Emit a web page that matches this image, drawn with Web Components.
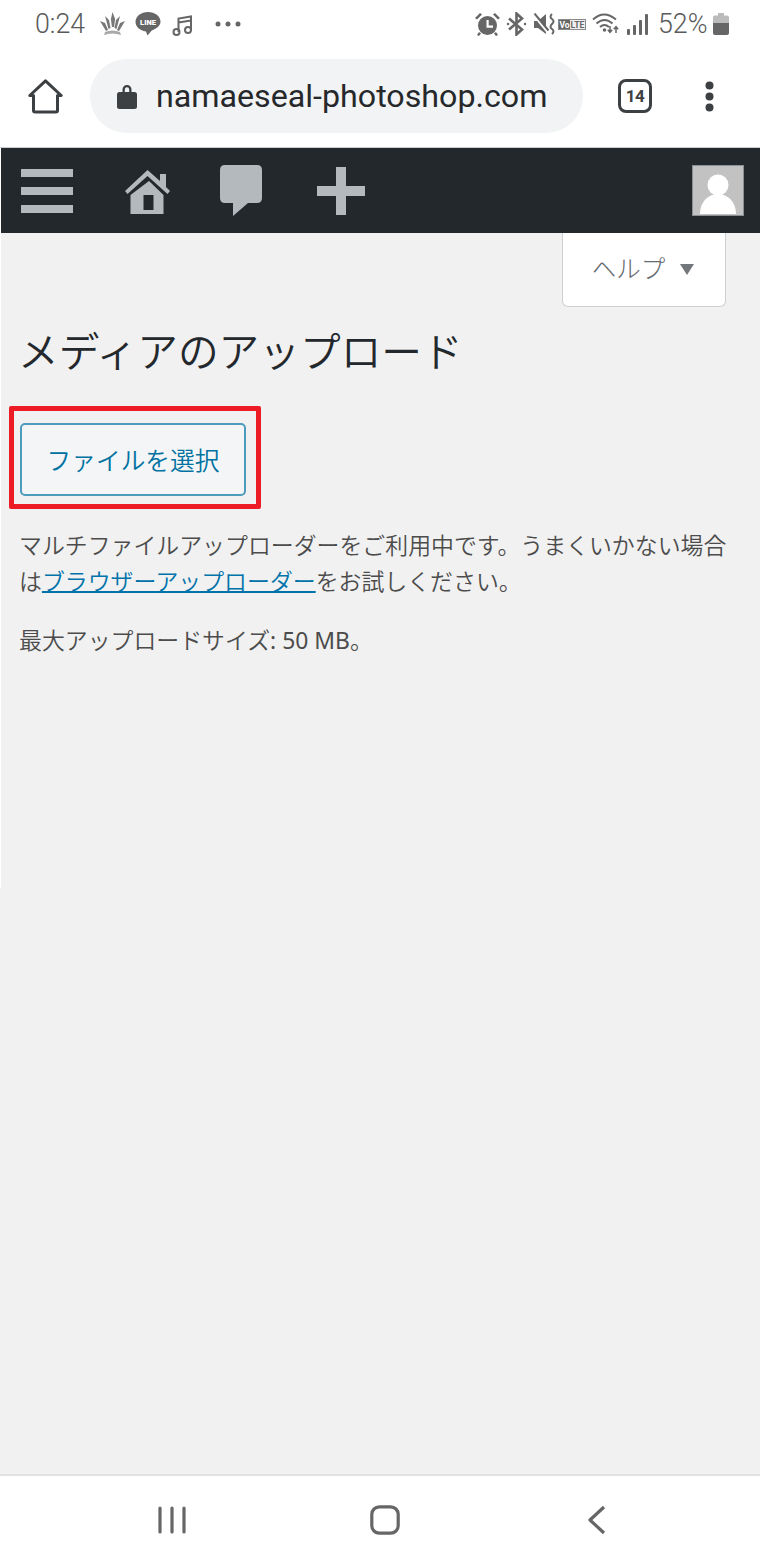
<!DOCTYPE html>
<html lang="ja">
<head>
<meta charset="utf-8">
<title>メディアのアップロード</title>
<style>
  html, body { margin: 0; padding: 0; background: #fff; }
  body { width: 760px; height: 1568px; overflow: hidden; display: flex; flex-direction: column; font-family: "Noto Sans CJK JP", "Noto Sans", sans-serif; }
  upload-page { flex: 1; }
  upload-page a { color: #0073aa; text-decoration: underline; text-decoration-thickness: 2px; }
  upload-page p { margin: 0 0 23px; }
  upload-page .latin { font-family: "Noto Sans", sans-serif; font-weight: 400; }
</style>
</head>
<body>
<status-bar></status-bar>
<browser-bar url="namaeseal-photoshop.com" tabs="14"></browser-bar>
<admin-bar></admin-bar>
<upload-page>
  <help-tab slot="help">ヘルプ</help-tab>
  <span slot="title">メディアのアップロード</span>
  <select-button slot="action">ファイルを選択</select-button>
  <p><span>マルチファイルアップローダーをご利用中です。うまくいかない場合</span><br><span>は</span><a href="#">ブラウザーアップローダー</a><span>をお試しください。</span></p>
  <p><span>最大アップロードサイズ</span><span class="latin">: 50 MB</span><span>。</span></p>
</upload-page>
<nav-bar></nav-bar>

<script>
class StatusBar extends HTMLElement {
  constructor() {
    super();
    this.attachShadow({ mode: 'open' });
  }

  connectedCallback() {
    this.shadowRoot.innerHTML = `
      <style>
        :host { display: flex; align-items: center; height: 48px; background: #fff; color: #5a5a5a; font: 300 26.800px Roboto, sans-serif; }
        svg { display: block; flex: none; }
        .time { margin-left: 35px; width: 52px; }
        .pct { margin-left: 10px; width: 51px; }
      </style>
      <span class="time">0:24</span>
      <svg style="margin-left:13px" width="25" height="24" viewBox="0 0 25 24" fill="#777">
        <path d="M12.500 0l2.600 7-1 8h-2.200l-1-8zM5 4l4 4 1.500 8-2 1zM20 4l-4 4-1.500 8 2 1zM0 9l5 2 3 7-2 1zM25 9l-5 2-3 7 2 1z"/>
        <path d="M5 20q7.500-3 15 0l1 3q-8.500-3-17 0z" fill="#aaa"/>
      </svg>
      <svg style="margin-left:10px" width="26" height="24" viewBox="0 0 26 24">
        <path d="M13 0C6 0 .5 4.300.5 9.800c0 5 4.300 8.800 10.500 9.600l1.500 4 4-4.700c5-2 9-5 9-8.900C25.500 4.300 20 0 13 0z" fill="#666"/>
        <text x="13" y="12.500" text-anchor="middle" font-family="Roboto, sans-serif" font-weight="900" font-size="7.500" fill="#fff">LINE</text>
      </svg>
      <svg style="margin-left:11px" width="21" height="23" viewBox="0 0 21 23" fill="none" stroke="#666" stroke-width="2">
        <path d="M6.500 19V5.500L19 3.500V17M6.500 9.500L19 7.500"/>
        <circle cx="4.500" cy="19" r="3"/><circle cx="16" cy="17" r="3"/>
      </svg>
      <svg style="margin-left:22px" width="26" height="6" viewBox="0 0 26 6" fill="#666">
        <circle cx="3" cy="3" r="2.500"/><circle cx="13" cy="3" r="2.500"/><circle cx="23" cy="3" r="2.500"/>
      </svg>
      <span style="flex:1"></span>
      <svg width="25" height="23" viewBox="0 0 25 23" fill="#666">
        <path d="M0 5l5-5 2 1.500-5 5zM25 5l-5-5-2 1.500 5 5z"/>
        <path fill-rule="evenodd" d="M12.500 3a9.500 9.500 0 1 0 0 19 9.500 9.500 0 0 0 0-19zM11.500 7h2.200v5.500h4.300v2.200h-6.500z"/>
        <path d="M4 19l2 1.500-2 2.500-2-1zM21 19l-2 1.500 2 2.500 2-1z"/>
      </svg>
      <svg style="margin-left:6px" width="21" height="24" viewBox="0 0 21 24" fill="none" stroke="#666" stroke-width="2.600">
        <path d="M3 6.500l13 11-5.500 5V1.500l5.500 5-13 11"/>
        <circle cx="2" cy="12" r="1.200" fill="#666" stroke="none"/><circle cx="19" cy="12" r="1.200" fill="#666" stroke="none"/>
      </svg>
      <svg style="margin-left:6px" width="23" height="22" viewBox="0 0 23 22">
        <path d="M1 8h4l8-7v20l-8-6H1z" fill="#666"/>
        <path d="M0 1.500l14 17" fill="none" stroke="#fff" stroke-width="2"/>
        <path d="M1.500 .5l14 17" fill="none" stroke="#666" stroke-width="2"/>
        <path d="M19 1q-3 3 0 5t0 5 0 5 0 5" fill="none" stroke="#666" stroke-width="2"/>
      </svg>
      <svg style="margin-left:2px" width="28" height="11" viewBox="0 0 28 11">
        <rect width="28" height="11" fill="#8a8a8a"/>
        <rect x="1" y="1" width="11" height="9" fill="#666"/>
        <rect x="12" y="1" width="15" height="9" fill="#eee"/>
        <text x="1.500" y="8.700" font-family="Roboto, sans-serif" font-weight="700" font-size="8.500" fill="#fff" textLength="10">Vo</text>
        <text x="12.500" y="8.700" font-family="Roboto, sans-serif" font-weight="700" font-size="8.500" fill="#666" textLength="14" lengthAdjust="spacingAndGlyphs">LTE</text>
      </svg>
      <svg style="margin-left:6px" width="27" height="22" viewBox="0 0 27 22" fill="none" stroke="#666" stroke-width="2">
        <path d="M1 6.500q11-10 23 0M4.500 10.500q8-7 16 0M8 14q4.500-4 9 0"/>
        <circle cx="12.500" cy="17" r="1.800" fill="#666" stroke="none"/>
        <path d="M18 13v6m-2.200-2.200l2.200 2.500 2.200-2.500M24 20v-6m-2.200 2.200l2.200-2.500 2.200 2.500" stroke-width="1.500"/>
      </svg>
      <svg style="margin-left:8px" width="21" height="21" viewBox="0 0 21 21" fill="#666">
        <rect x="0" y="15" width="3" height="6" rx="1"/><rect x="6" y="11" width="3" height="10" rx="1"/><rect x="12" y="6" width="3" height="15" rx="1"/><rect x="18" y="0" width="3" height="21" rx="1"/>
      </svg>
      <span class="pct">52%</span>
      <svg style="margin:0 31px 0 4px" width="16" height="22" viewBox="0 0 16 22">
        <path d="M5 0h6v2.500h3q2 0 2 2V10H0V4.500q0-2 2-2h3z" fill="#bbb"/>
        <path d="M0 10h16v10q0 2-2 2H2q-2 0-2-2z" fill="#666"/>
      </svg>
    `;
  }
}

class BrowserBar extends HTMLElement {
  constructor() {
    super();
    this.attachShadow({ mode: 'open' });
  }

  connectedCallback() {
    const url = this.getAttribute('url');
    const tabs = this.getAttribute('tabs');
    this.shadowRoot.innerHTML = `
      <style>
        :host { display: flex; align-items: center; box-sizing: content-box; height: 96px; padding-bottom: 3px; background: #fff; border-bottom: 1px solid #ccc; }
        svg { display: block; flex: none; }
        .pill { display: flex; align-items: center; box-sizing: border-box; width: 493px; height: 74px; margin: 0 0 0 27px; padding-left: 27px; border-radius: 37px; background: #f1f3f4; color: #26282b; font: 32.200px Roboto, sans-serif; white-space: nowrap; }
        .pill span { margin-left: 19px; }
        .tabs { display: flex; align-items: center; justify-content: center; flex: none; box-sizing: border-box; width: 34px; height: 34px; margin-left: 35px; border: 3.500px solid #3c4043; border-radius: 8px; color: #3c4043; font: 700 17px Roboto, sans-serif; letter-spacing: -.5px; }
      </style>
      <svg style="margin-left:28px" width="35" height="35" viewBox="0 0 35 35" fill="none" stroke="#3c4043" stroke-width="3" stroke-linejoin="round">
        <path d="M1.800 16.500L17.500 1.800 33.200 16.500H29.500V31.500q0 1.500-1.500 1.500H7q-1.500 0-1.500-1.500V16.500z"/>
      </svg>
      <div class="pill">
        <svg width="20" height="26" viewBox="0 0 20 26" fill="#3c4043">
          <path d="M5.500 9V6.500a4.500 4.500 0 0 1 9 0V9h-2.300V6.500a2.200 2.200 0 0 0-4.400 0V9z"/>
          <rect y="9" width="20" height="17" rx="2.500"/>
        </svg>
        <span>${url}</span>
      </div>
      <div class="tabs">${tabs}</div>
      <svg style="margin-left:53px" width="9" height="31" viewBox="0 0 9 31" fill="#3c4043">
        <circle cx="4.500" cy="4.500" r="4"/><circle cx="4.500" cy="15.500" r="4"/><circle cx="4.500" cy="26.500" r="4"/>
      </svg>
    `;
  }
}

class AdminBar extends HTMLElement {
  constructor() {
    super();
    this.attachShadow({ mode: 'open' });
  }

  connectedCallback() {
    this.shadowRoot.innerHTML = `
      <style>
        :host { display: flex; align-items: flex-start; box-sizing: border-box; height: 85px; margin-left: 1px; padding-left: 20px; background: #23282d; }
        svg { display: block; flex: none; fill: #b4b9be; }
        .avatar { margin-left: auto; margin-right: 16px; margin-top: 17px; }
      </style>
      <svg style="margin-top:21px" width="52" height="44" viewBox="0 0 52 44">
        <rect width="52" height="8"/><rect y="18" width="52" height="8"/><rect y="36" width="52" height="8"/>
      </svg>
      <svg style="margin:20px 0 0 52px" width="45" height="46" viewBox="0 0 45 46">
        <path fill-rule="evenodd" d="M22.500 13L37 27v19H4V27L22.500 13zM17 27v15h10V27z" transform="translate(1.500 0)"/>
        <path d="M22.500 2L35 13V6h6v13l4 4-2.500 3L22.500 8 2.500 26 0 23z"/>
      </svg>
      <svg style="margin:17px 0 0 50px" width="42" height="51" viewBox="0 0 42 51">
        <path d="M5 0h32q5 0 5 5v28q0 5-5 5H28L13 51V38H5q-5 0-5-5V5q0-5 5-5z"/>
      </svg>
      <svg style="margin:19px 0 0 55px" width="48" height="48" viewBox="0 0 48 48">
        <path d="M19 0h10v19h19v10H29v19H19V29H0V19h19z"/>
      </svg>
      <svg class="avatar" width="52" height="51" viewBox="0 0 52 51">
        <rect x=".5" y=".5" width="51" height="50" fill="#c2c2c2" stroke="#8a8f94"/>
        <circle cx="26" cy="20" r="10.500" fill="#fff"/>
        <path d="M8 49c0-12 8-20 18-20s18 8 18 20z" fill="#fff"/>
      </svg>
    `;
  }
}

class HelpTab extends HTMLElement {
  constructor() {
    super();
    this.attachShadow({ mode: 'open' });
  }

  connectedCallback() {
    this.shadowRoot.innerHTML = `
      <style>
        :host { display: flex; align-items: center; justify-content: center; gap: 15px; box-sizing: border-box; width: 164px; height: 74px; padding: 0 2px 3px 0; background: #fff; border: 1px solid #ccd0d4; border-top: 0; border-radius: 0 0 6px 6px; color: #666b70; font-size: 24.500px; font-weight: 300; }
        i { width: 0; height: 0; margin-top: 3px; border: 7.500px solid transparent; border-top: 11px solid #72777c; border-bottom: 0; }
      </style>
      <span><slot></slot></span><i></i>
    `;
  }
}

class SelectButton extends HTMLElement {
  constructor() {
    super();
    this.attachShadow({ mode: 'open' });
  }

  connectedCallback() {
    this.shadowRoot.innerHTML = `
      <style>
        :host { display: block; box-sizing: border-box; width: 252px; height: 103px; padding: 12px 10px 0 6px; border: 5px solid #ed1c24; border-radius: 2px; }
        div { display: flex; align-items: center; justify-content: center; box-sizing: border-box; width: 226px; height: 73px; padding-bottom: 1px; background: #f3f5f6; border: 2px solid #4d9cbd; border-radius: 5px; color: #0071a1; font-size: 24.700px; font-weight: 350; white-space: nowrap; }
      </style>
      <div><slot></slot></div>
    `;
  }
}

class UploadPage extends HTMLElement {
  constructor() {
    super();
    this.attachShadow({ mode: 'open' });
  }

  connectedCallback() {
    this.shadowRoot.innerHTML = `
      <style>
        :host { display: block; background: linear-gradient(#fff, #fff) 0 0 / 1px 655px no-repeat, #f1f1f1; color: #4c4c4c; font-size: 22.900px; font-weight: 350; line-height: 36px; overflow: hidden; }
        .help { display: flex; justify-content: flex-end; padding-right: 34px; }
        h1 { margin: 13px 0 0 18px; color: #23282d; font-size: 40.700px; font-weight: 350; line-height: 60px; white-space: nowrap; }
        .action { margin: 26px 0 0 9px; }
        .copy { margin: 17px 19px 0 19px; white-space: nowrap; }
      </style>
      <div class="help"><slot name="help"></slot></div>
      <h1><slot name="title"></slot></h1>
      <div class="action"><slot name="action"></slot></div>
      <div class="copy"><slot></slot></div>
    `;
  }
}

class NavBar extends HTMLElement {
  constructor() {
    super();
    this.attachShadow({ mode: 'open' });
  }

  connectedCallback() {
    this.shadowRoot.innerHTML = `
      <style>
        :host { display: flex; align-items: center; box-sizing: border-box; height: 94px; padding-bottom: 4px; background: #fff; border-top: 2px solid #e2e2e2; }
        svg { display: block; flex: none; fill: none; stroke: #666; stroke-linecap: round; stroke-linejoin: round; stroke-width: 3.200px; }
      </style>
      <svg style="margin-left:158px" width="28" height="28" viewBox="0 0 28 28">
        <path d="M2 2v24M14 2v24M26 2v24"/>
      </svg>
      <svg style="margin-left:184px" width="30" height="30" viewBox="0 0 30 30">
        <rect x="1.800" y="1.800" width="26.400" height="26.400" rx="7.500"/>
      </svg>
      <svg style="margin-left:187px" width="20" height="30" viewBox="0 0 20 30">
        <path d="M17 2L3 15l14 13" stroke-linecap="butt"/>
      </svg>
    `;
  }
}

customElements.define('status-bar', StatusBar);
customElements.define('browser-bar', BrowserBar);
customElements.define('admin-bar', AdminBar);
customElements.define('help-tab', HelpTab);
customElements.define('select-button', SelectButton);
customElements.define('upload-page', UploadPage);
customElements.define('nav-bar', NavBar);
</script>
</body>
</html>
